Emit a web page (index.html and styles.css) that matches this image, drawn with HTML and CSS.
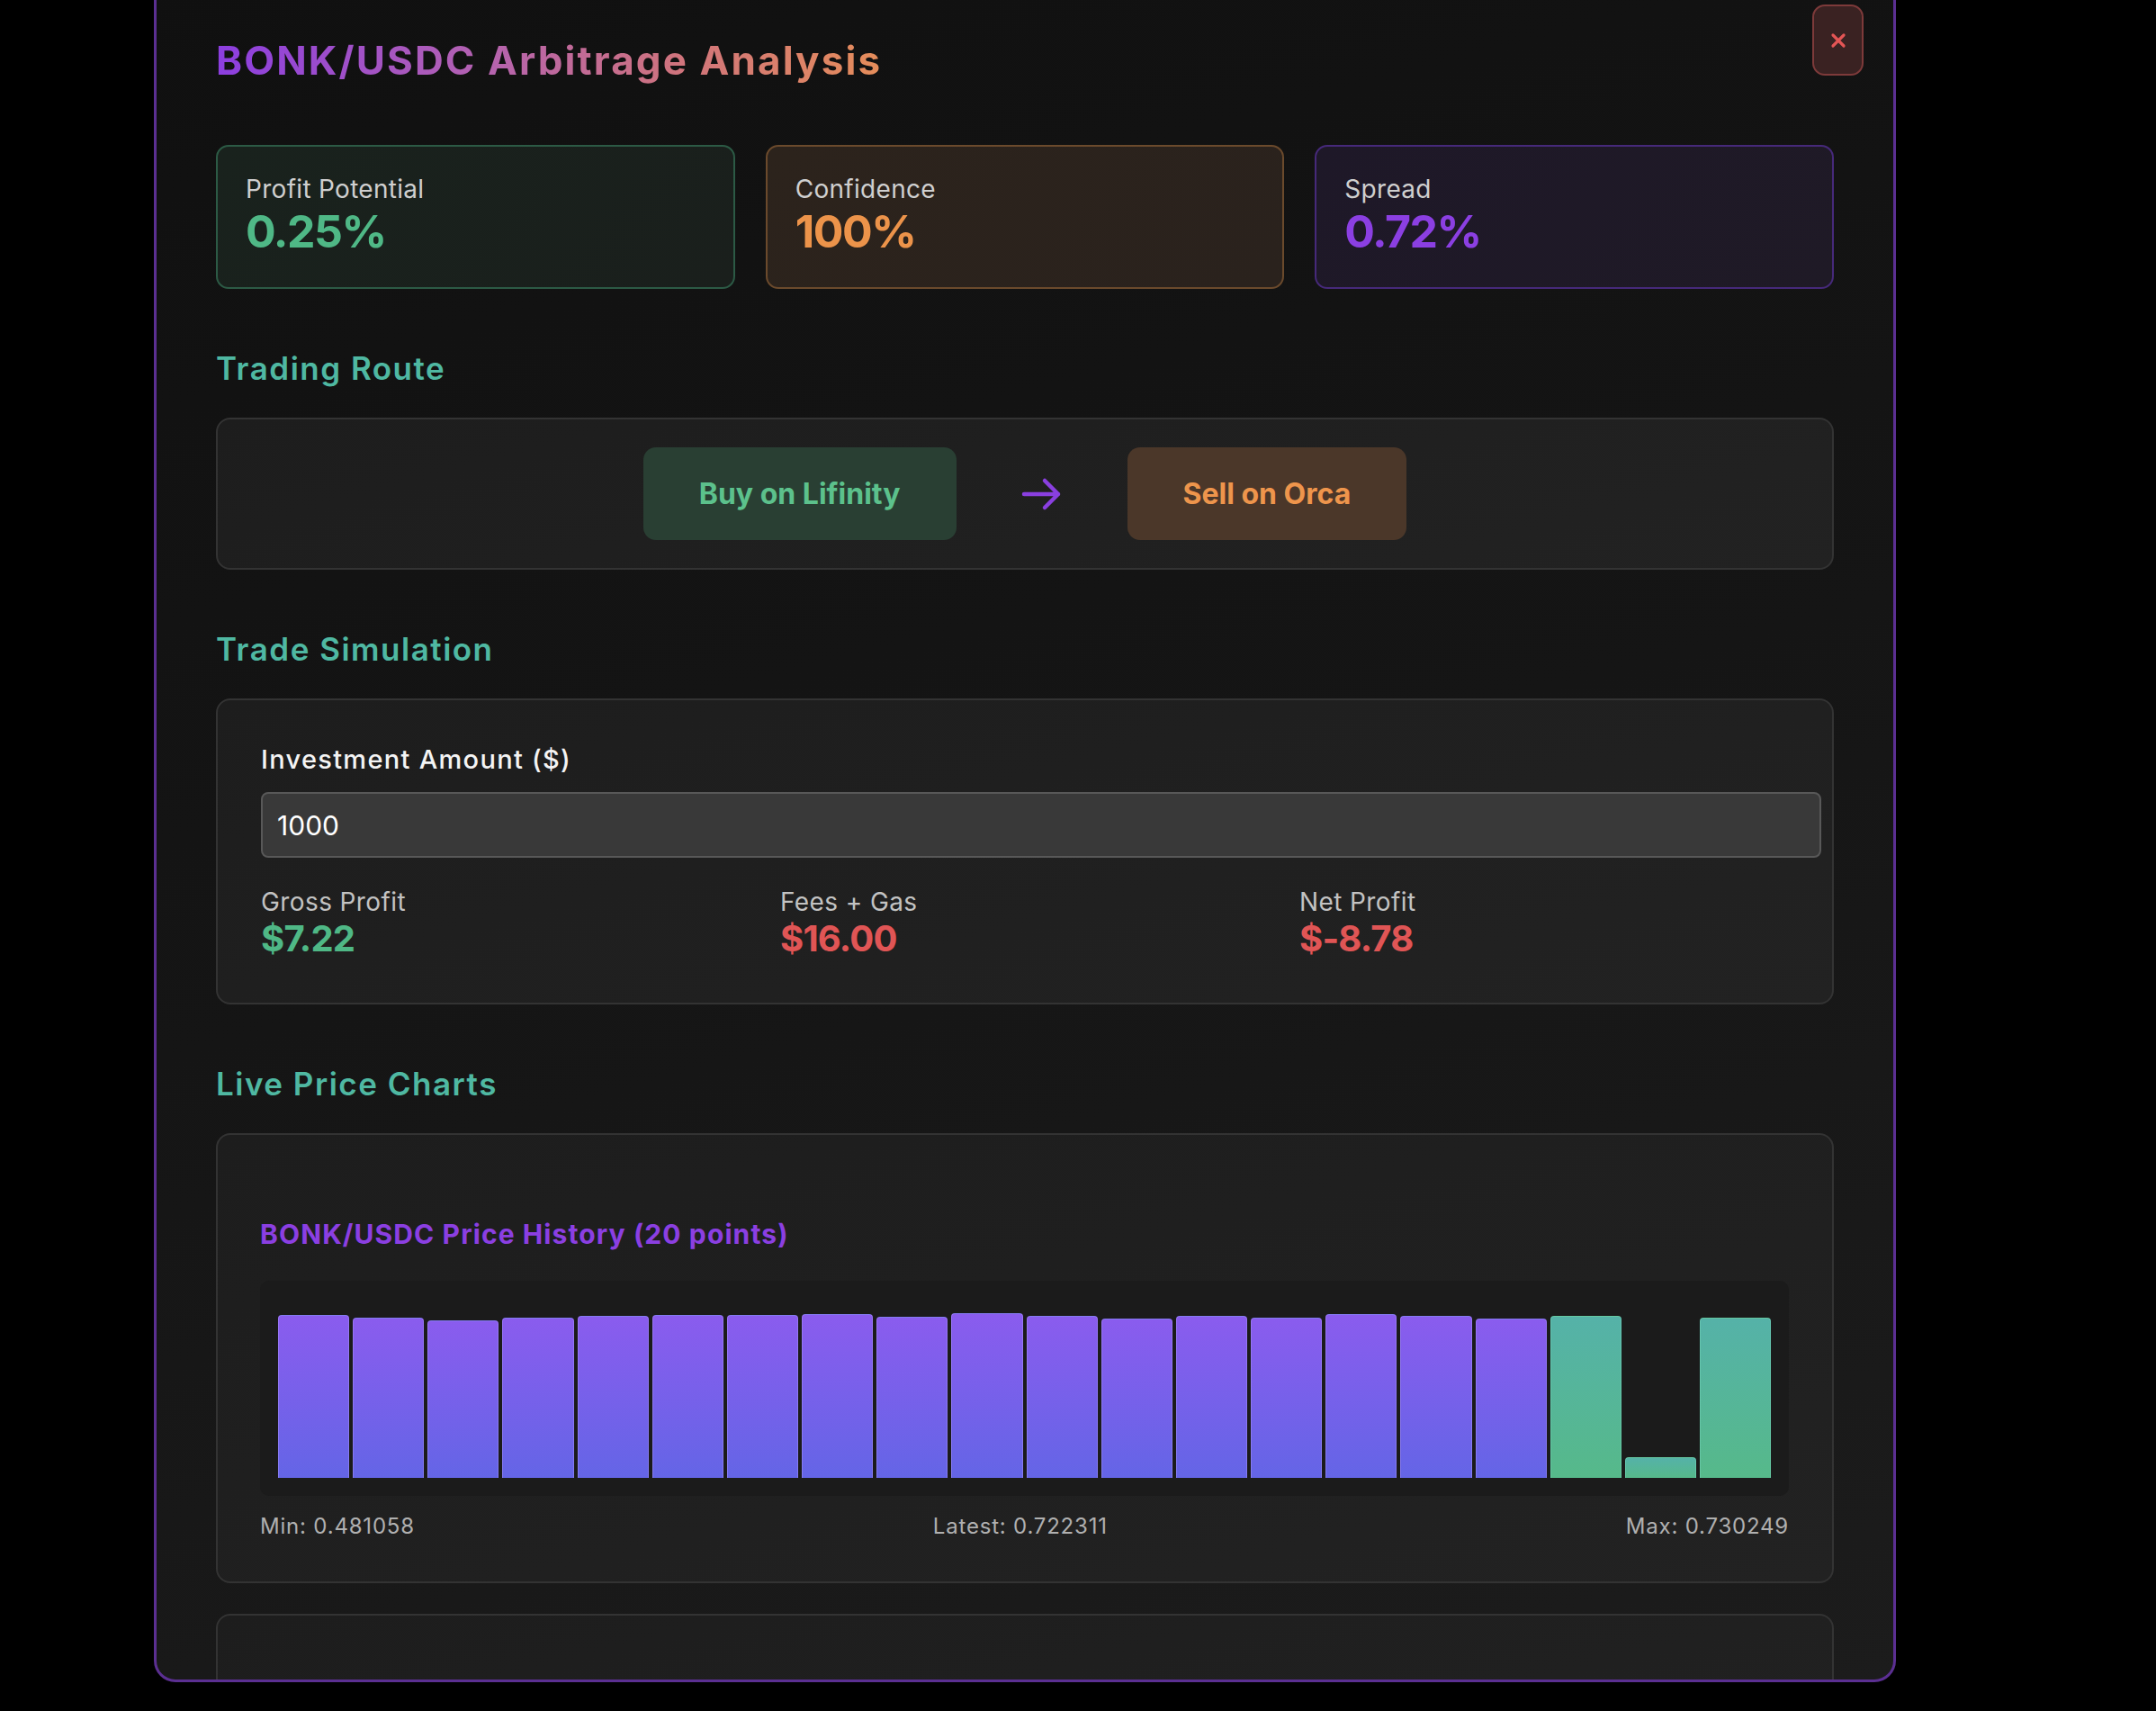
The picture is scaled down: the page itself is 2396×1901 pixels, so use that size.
FILE: index.html
```html
<!DOCTYPE html>
<html lang="en">
<head>
<meta charset="utf-8">
<title>BONK/USDC Arbitrage Analysis</title>
<link rel="stylesheet" href="styles.css">
</head>
<body>
<div class="modal">
  <button class="close-btn" aria-label="Close">
    <svg width="20" height="20" viewBox="0 0 20 20"><path d="M4 4 L16 16 M16 4 L4 16" stroke="#e35555" stroke-width="3.2" stroke-linecap="round"/></svg>
  </button>
  <h2 class="modal-title">BONK/USDC Arbitrage Analysis</h2>

  <div class="stats">
    <div class="stat stat-green">
      <div class="stat-label">Profit Potential</div>
      <div class="stat-value">0.25%</div>
    </div>
    <div class="stat stat-orange">
      <div class="stat-label">Confidence</div>
      <div class="stat-value">100%</div>
    </div>
    <div class="stat stat-purple">
      <div class="stat-label">Spread</div>
      <div class="stat-value">0.72%</div>
    </div>
  </div>

  <h3 class="section-title">Trading Route</h3>
  <div class="panel route">
    <div class="route-step buy">Buy on Lifinity</div>
    <svg class="route-arrow" width="48" height="40" viewBox="0 0 48 40"><path d="M4 20 H42 M27 5 L42 20 L27 35" fill="none" stroke="#8a3fe0" stroke-width="4.5" stroke-linecap="round" stroke-linejoin="round"/></svg>
    <div class="route-step sell">Sell on Orca</div>
  </div>

  <h3 class="section-title">Trade Simulation</h3>
  <div class="panel sim">
    <label class="sim-label" for="amt">Investment Amount ($)</label>
    <input id="amt" class="sim-input" type="text" value="1000">
    <div class="results">
      <div class="result">
        <div class="result-label">Gross Profit</div>
        <div class="result-value green">$7.22</div>
      </div>
      <div class="result">
        <div class="result-label">Fees + Gas</div>
        <div class="result-value red">$16.00</div>
      </div>
      <div class="result">
        <div class="result-label">Net Profit</div>
        <div class="result-value red">$-8.78</div>
      </div>
    </div>
  </div>

  <h3 class="section-title">Live Price Charts</h3>
  <div class="panel chart-card">
    <div class="chart-title">BONK/USDC Price History (20 points)</div>
    <div class="chart">
      <div class="bar" style="height:181px"></div>
      <div class="bar" style="height:178px"></div>
      <div class="bar" style="height:175px"></div>
      <div class="bar" style="height:178px"></div>
      <div class="bar" style="height:180px"></div>
      <div class="bar" style="height:181px"></div>
      <div class="bar" style="height:181px"></div>
      <div class="bar" style="height:182px"></div>
      <div class="bar" style="height:179px"></div>
      <div class="bar" style="height:183px"></div>
      <div class="bar" style="height:180px"></div>
      <div class="bar" style="height:177px"></div>
      <div class="bar" style="height:180px"></div>
      <div class="bar" style="height:178px"></div>
      <div class="bar" style="height:182px"></div>
      <div class="bar" style="height:180px"></div>
      <div class="bar" style="height:177px"></div>
      <div class="bar recent" style="height:180px"></div>
      <div class="bar recent" style="height:23px"></div>
      <div class="bar recent" style="height:178px"></div>
    </div>
    <div class="chart-legend">
      <span>Min: 0.481058</span>
      <span>Latest: 0.722311</span>
      <span>Max: 0.730249</span>
    </div>
  </div>
  <div class="panel chart-card next"></div>
</div>
</body>
</html>
```

FILE: styles.css
```css
* { box-sizing: border-box; }

html, body {
  margin: 0;
  padding: 0;
  background: #000;
}

body {
  font-family: Inter, "Noto Sans", "Liberation Sans", sans-serif;
  color: #e8e8e8;
  padding-left: 171px;
  overflow: hidden;
  height: 1901px;
}

.modal {
  position: relative;
  width: 1936px;
  height: 1897px;
  margin-top: -28px;
  border: 3px solid #5b2f92;
  border-radius: 24px;
  background: linear-gradient(165deg, #101010 0%, #151515 50%, #1c1c1c 100%);
  padding: 66px 66px 0 66px;
  overflow: hidden;
}

.close-btn {
  position: absolute;
  top: 30px;
  right: 33px;
  width: 57px;
  height: 79px;
  border-radius: 14px;
  border: 2px solid #7d3a3a;
  background: #3a2222;
  display: flex;
  align-items: center;
  justify-content: center;
  padding: 0;
}

.modal-title {
  margin: 0 0 67px 0;
  font-size: 44px;
  font-weight: 700;
  line-height: 53px;
  letter-spacing: 2.1px;
  background: linear-gradient(90deg, #8c3ee0 0%, #b462b0 40%, #d0747c 70%, #e58d5a 100%);
  -webkit-background-clip: text;
  background-clip: text;
  color: transparent;
  display: inline-block;
}

.stats {
  display: grid;
  grid-template-columns: repeat(3, 1fr);
  gap: 34px;
}

.stat {
  border: 2px solid;
  border-radius: 14px;
  padding: 30px 31px;
  height: 160px;
}

.stat-label {
  font-size: 28px;
  line-height: 34px;
  letter-spacing: 0.3px;
  color: #cfcfcf;
}

.stat-value {
  font-size: 50px;
  font-weight: 700;
  line-height: 60px;
  letter-spacing: -1.5px;
}

.stat-green {
  background: linear-gradient(135deg, #19221d, #1a1f1c);
  border-color: #2c5a45;
}
.stat-green .stat-value { color: #4fb886; }

.stat-orange {
  background: linear-gradient(135deg, #2c231c, #2a221d);
  border-color: #6b4a2c;
}
.stat-orange .stat-value { color: #ec934a; }

.stat-purple {
  background: linear-gradient(135deg, #1e1828, #1f1a26);
  border-color: #46297a;
}
.stat-purple .stat-value { color: #8b3fe2; }

.section-title {
  margin: 67px 0 34px 0;
  font-size: 35px;
  font-weight: 600;
  line-height: 42px;
  color: #4fb8a2;
  letter-spacing: 1.5px;
}

.panel {
  background: linear-gradient(165deg, #1d1d1d, #222222);
  border: 2px solid #333333;
  border-radius: 16px;
}

.route {
  height: 169px;
  display: flex;
  align-items: center;
  justify-content: center;
  gap: 71px;
}

.route-step {
  height: 103px;
  display: flex;
  align-items: center;
  padding: 0 62px;
  border-radius: 14px;
  font-size: 32px;
  font-weight: 700;
}

.route-step.buy {
  background: #293f33;
  color: #5cc18c;
}

.route-step.sell {
  background: #4b3729;
  color: #ee954c;
  padding: 0 62px;
}

.route-arrow { display: block; }

.sim {
  padding: 48px 48px 47px 48px;
}

.sim-label {
  display: block;
  font-size: 29px;
  font-weight: 500;
  line-height: 35px;
  letter-spacing: 1.3px;
  color: #f4f4f4;
}

.sim-input {
  box-sizing: content-box;
  display: block;
  width: 100%;
  margin-top: 19px;
  height: 37px;
  padding: 16px 16px;
  border: 2px solid #585858;
  border-radius: 8px;
  background: #393939;
  color: #ffffff;
  font-family: inherit;
  font-size: 30px;
  outline: none;
}

.results {
  margin-top: 32px;
  display: grid;
  grid-template-columns: repeat(3, 1fr);
  gap: 33px;
}

.result-label {
  font-size: 28px;
  line-height: 34px;
  letter-spacing: 0.4px;
  color: #c2c2c2;
}

.result-value {
  font-size: 40px;
  font-weight: 700;
  line-height: 48px;
  letter-spacing: -0.8px;
}

.green { color: #4fb886; }
.red { color: #e05555; }

.chart-card {
  padding: 48px 48px 47px 47px;
}

.chart-title {
  margin-top: 44px;
  font-size: 30px;
  font-weight: 700;
  line-height: 36px;
  color: #8b3fe2;
  letter-spacing: 1.1px;
}

.chart {
  margin-top: 34px;
  height: 239px;
  padding: 20px;
  background: #1b1b1b;
  border-radius: 10px;
  display: flex;
  align-items: flex-end;
  gap: 4px;
}

.bar {
  flex: 1;
  border-radius: 4px 4px 0 0;
  border: 1px solid rgba(170, 150, 255, 0.45);
  border-bottom: none;
  background: linear-gradient(180deg, #8a5cee 0%, #6465e6 100%);
}

.bar.recent {
  border-color: rgba(120, 220, 190, 0.45);
  background: linear-gradient(180deg, #55b2a8 0%, #56b98a 100%);
}

.chart-legend {
  margin-top: 19px;
  display: flex;
  justify-content: space-between;
  font-size: 24px;
  line-height: 29px;
  letter-spacing: 0.8px;
  color: #b0b0b0;
}

.next {
  margin-top: 34px;
  height: 300px;
}
```
